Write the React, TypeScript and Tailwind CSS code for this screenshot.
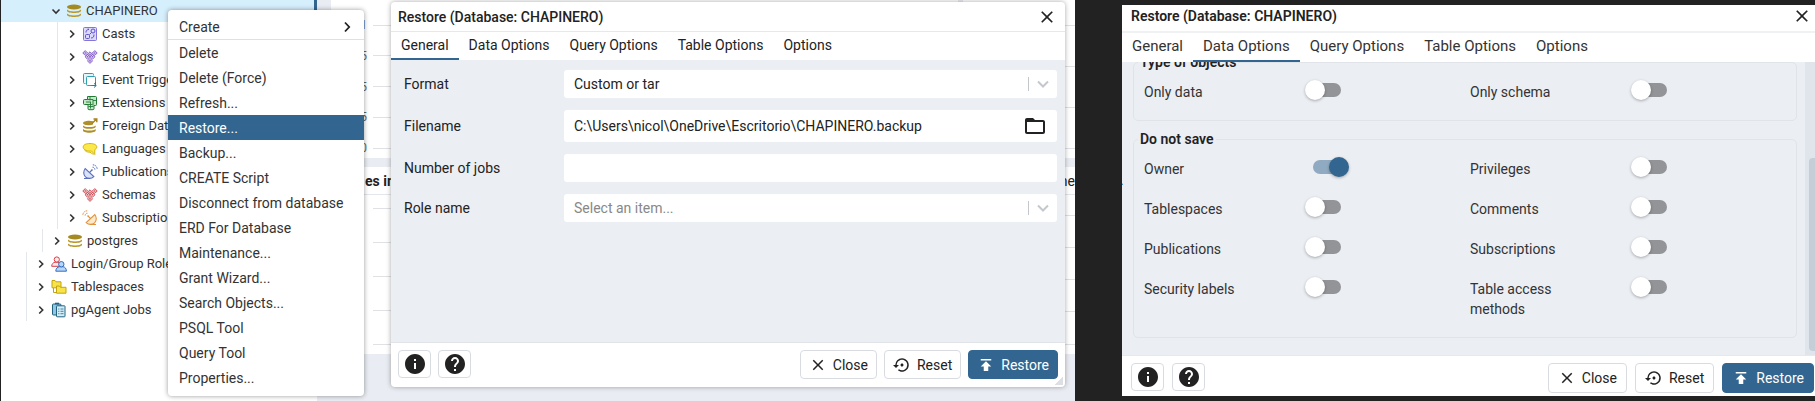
import { useState } from "react";
import type { ReactNode } from "react";
import {
  MdClose,
  MdFolderOpen,
  MdHelp,
  MdInfo,
  MdPublish,
  MdSettingsBackupRestore,
} from "react-icons/md";

/* ---------- Tree icons ---------- */

function Icon({ children }: { children: ReactNode }) {
  return (
    <svg viewBox="0 0 16 16" className="size-4 shrink-0" fill="none" aria-hidden="true">
      {children}
    </svg>
  );
}

function DatabaseIcon() {
  return (
    <Icon>
      <g fill="#b89a2c">
        <ellipse cx="8" cy="4" rx="7" ry="2.600" fill="#a58a1f" />
        <path d="M1 6.600c1 1.200 3.600 1.900 7 1.900s6-.7 7-1.900v1.200c0 1.300-3.100 2.300-7 2.300S1 9.100 1 7.800z" />
        <path d="M1 10.600c1 1.200 3.600 1.900 7 1.900s6-.7 7-1.900v1.200c0 1.300-3.100 2.300-7 2.300s-7-1-7-2.300z" />
      </g>
    </Icon>
  );
}

function CastsIcon() {
  return (
    <Icon>
      <rect x="1.500" y="1.500" width="13" height="13" rx="1" fill="#dcd9fa" stroke="#8277d8" />
      <rect x="3.500" y="8.500" width="4" height="4" rx="1" stroke="#5f51c9" />
      <circle cx="11" cy="5" r="2" stroke="#5f51c9" />
      <path d="M4 6.500C4 4.500 5 3.500 7 3.500M7 3.500 5.800 2.600M12 8.500c0 2.500-1 3.500-3 3.500M7.500 8.500l2-2" stroke="#5f51c9" />
    </Icon>
  );
}

function ClusterIcon({ stroke, fill }: { stroke: string; fill: string }) {
  return (
    <Icon>
      <g stroke={stroke} fill={fill} strokeWidth=".9">
        <path d="M3.200 1.600 5.600 4 3.200 6.400.8 4z" />
        <path d="M8 2.800 10.400 5.200 8 7.600 5.600 5.200z" />
        <path d="M12.800 1.600 15.200 4l-2.400 2.400L10.400 4z" />
        <path d="M5.500 5.400l2.400 2.400-2.400 2.400-2.400-2.400z" />
        <path d="M10.500 5.400l2.400 2.400-2.400 2.400-2.400-2.400z" />
        <path d="M8 9.400l2.500 2.500L8 14.400l-2.500-2.500z" />
      </g>
      <g fill={stroke}>
        <circle cx="3.200" cy="4" r=".8" />
        <circle cx="8" cy="5.200" r=".8" />
        <circle cx="12.800" cy="4" r=".8" />
        <circle cx="5.500" cy="7.800" r=".8" />
        <circle cx="10.500" cy="7.800" r=".8" />
        <circle cx="8" cy="11.900" r=".8" />
      </g>
    </Icon>
  );
}

function EventTriggerIcon() {
  return (
    <Icon>
      <path d="M3.500 11.500h-1a1 1 0 0 1-1-1v-8a1 1 0 0 1 1-1h8a1 1 0 0 1 1 1v1" fill="#e3f5f8" stroke="#2f9fae" />
      <path d="M10 13.500H5.500a1 1 0 0 1-1-1v-7a1 1 0 0 1 1-1h7a1 1 0 0 1 1 1V10" fill="#ffffff" stroke="#2f9fae" />
      <path d="M9.500 13.500H14m-2-2.200 2.300 2.200-2.300 2M13.500 10v3" stroke="#1d7f9c" />
    </Icon>
  );
}

function ExtensionsIcon() {
  return (
    <Icon>
      <path d="M5.500 1.500h8a1 1 0 0 1 1 1v7a1 1 0 0 1-1 1H12v3.200a1 1 0 0 1-1 1H7a1 1 0 0 1-1-1V9.500H2.500a1 1 0 0 1-1-1V5.500a1 1 0 0 1 1-1h3z" fill="#c2e8c5" stroke="#237a35" />
      <path d="M5.500 4.500H11v6M6 9.500h4.500M8 2v3.500M14 5.500h-3M4 7h5M8.500 7v6.500M6.500 11.500h5" stroke="#237a35" strokeWidth=".9" />
    </Icon>
  );
}

function ForeignDataIcon() {
  return (
    <Icon>
      <g fill="#b08f2a">
        <path d="M1 5c0-1.300 2.700-2.300 6-2.300 1.500 0 2.900.2 4 .6v3.200C10 7 8.600 7.300 7 7.300 3.700 7.300 1 6.300 1 5z" />
        <path d="M1 7.400c1.200 1.100 3.400 1.600 6.300 1.600s5.200-.5 6.400-1.600v1.300c0 1.200-2.900 2.100-6.400 2.100S1 9.900 1 8.700z" />
        <path d="M1 11c1.200 1.100 3.400 1.600 6.300 1.600s5.200-.5 6.400-1.600v1.600c0 1.300-2.900 2.200-6.400 2.200S1 13.900 1 12.600z" />
      </g>
      <path d="M10 5.500 14.500 1M11.500 1h3.300v3.300" stroke="#a8801c" strokeWidth="1.400" />
    </Icon>
  );
}

function LanguagesIcon() {
  return (
    <Icon>
      <path d="M8 2.500c3.800 0 6.800 1.300 6.800 3.500 0 1.100-.8 2-2 2.600v4.900L9.500 10c-.5 0-1 .1-1.500.1-3.800 0-6.800-1.700-6.800-4.100S4.200 2.500 8 2.500z" fill="#fbe94b" stroke="#d4b50c" />
      <path d="M2.500 8.500c.5 1.800 2.500 2.700 5.500 2.700l3.500 2.300" stroke="#d4b50c" />
    </Icon>
  );
}

function DishIcon({ stroke, fill, flip }: { stroke: string; fill: string; flip?: boolean }) {
  return (
    <Icon>
      <g transform={flip ? "translate(16 0) scale(-1 1)" : undefined}>
        <path d="M3.200 4.500c-2 2.600-2 6.200.2 8.300s6 2.200 8.400-.2z" fill={fill} stroke={stroke} strokeWidth="1.100" />
        <path d="M7.500 8.500 10 6M2 14.500h6" stroke={stroke} strokeWidth="1.100" />
        <circle cx="10" cy="6" r=".8" fill={stroke} />
        <path d="M10.500 3.200c1.500 0 2.400 1 2.400 2.400M10.800.8c2.600 0 4.400 1.900 4.400 4.400" stroke={stroke} strokeDasharray="1.600 .8" />
      </g>
    </Icon>
  );
}

function RolesIcon() {
  return (
    <Icon>
      <g stroke="#d2424a" fill="#fdeaea">
        <path d="M.7 10.300c0-2.300 1.500-3.800 3.300-4.100h3c1.500.3 2.500 1.500 2.800 4.100z" />
        <circle cx="5.800" cy="3.500" r="2.600" />
      </g>
      <g stroke="#2f6fbf" fill="#b8d6f6">
        <path d="M4.800 15.200c0-2.600 1.600-4.200 3.600-4.500h3.700c2 .3 3.300 1.900 3.300 4.500z" />
        <circle cx="10.300" cy="8.200" r="2.700" />
      </g>
    </Icon>
  );
}

function TablespacesIcon() {
  return (
    <Icon>
      <g fill="#f8e34a" stroke="#c2a50e">
        <path d="M1 1.500h3l1 1.300h5v6H1z" />
        <path d="M2.500 9v4.500H5" fill="none" />
        <path d="M5.500 7h3l1 1.300h5.500v5.900H5.500z" />
      </g>
    </Icon>
  );
}

function AgentIcon() {
  return (
    <Icon>
      <path d="M5 13H2.500a1 1 0 0 1-1-1V3a1 1 0 0 1 1-1h6.500a1 1 0 0 1 1 1v1" fill="#8fc6e4" stroke="#22627f" />
      <path d="M4 1.500h4" stroke="#22627f" strokeWidth="1.600" />
      <rect x="5.500" y="3.800" width="8.500" height="11" rx=".6" fill="#d5edf8" stroke="#22627f" />
      <path d="M7.200 7h1.200M9.500 7h3M7.200 9.300h1.200M9.500 9.300h3M7.200 11.700h1.200M9.500 11.700h3" stroke="#3d85a8" />
    </Icon>
  );
}

/* ---------- Object tree ---------- */

function Chevron({ open = false }: { open?: boolean }) {
  return (
    <svg viewBox="0 0 12 12" className="size-3 shrink-0" fill="none" stroke="#333" strokeWidth="1.600" aria-hidden="true">
      {open ? <path d="M2.500 4.500 6 8l3.500-3.500" /> : <path d="M4.200 2.500 7.700 6l-3.500 3.500" />}
    </svg>
  );
}

function TreeRow({ icon, label, open }: { icon: ReactNode; label: string; open?: boolean }) {
  return (
    <div role="treeitem" aria-expanded={!!open} className="flex h-[23px] items-center gap-1 pl-2 whitespace-nowrap">
      <Chevron open={open} />
      {icon}
      <span>{label}</span>
    </div>
  );
}

const databaseChildren: [string, ReactNode][] = [
  ["Casts", <CastsIcon />],
  ["Catalogs", <ClusterIcon stroke="#7a4fc4" fill="#e4d8f8" />],
  ["Event Triggers", <EventTriggerIcon />],
  ["Extensions", <ExtensionsIcon />],
  ["Foreign Data", <ForeignDataIcon />],
  ["Languages", <LanguagesIcon />],
  ["Publications", <DishIcon stroke="#5a6fc0" fill="#dbe3f8" />],
  ["Schemas", <ClusterIcon stroke="#c8404a" fill="#f8dcdc" />],
  ["Subscriptions", <DishIcon stroke="#e2913c" fill="#fdeacb" flip />],
];

function ObjectTree() {
  return (
    <nav role="tree" aria-label="Object explorer" className="w-[317px] shrink-0 overflow-hidden border-l border-[#222] bg-white text-[13px] text-[#333]">
      <div className="flex h-[22px] items-center border-r-3 border-[#326690] bg-[#d6effc] pl-[41px]">
        <TreeRow icon={<DatabaseIcon />} label="CHAPINERO" open />
      </div>
      <div className="ml-14 border-l border-[#e3e6ea]">
        {databaseChildren.map(([label, icon]) => (
          <TreeRow key={label} icon={icon} label={label} />
        ))}
      </div>
      <div className="ml-[41px] border-l border-[#e3e6ea]">
        <TreeRow icon={<DatabaseIcon />} label="postgres" />
      </div>
      <div className="ml-[25px] border-l border-[#e3e6ea]">
        <TreeRow icon={<RolesIcon />} label="Login/Group Roles" />
        <TreeRow icon={<TablespacesIcon />} label="Tablespaces" />
        <TreeRow icon={<AgentIcon />} label="pgAgent Jobs" />
      </div>
    </nav>
  );
}

/* ---------- Dashboard behind the dialog ---------- */

function GridLines({ labels }: { labels: string[] }) {
  return (
    <div className="flex flex-1 flex-col justify-between">
      {labels.map((label, i) => (
        <div key={i} className="flex h-3 items-center gap-1.5">
          <span className="w-9 text-right text-xs leading-3 text-[#666]">{label}</span>
          <span className="h-px flex-1 bg-[#dfe1e4]" />
        </div>
      ))}
    </div>
  );
}

function Dashboard() {
  return (
    <div className="flex min-w-0 flex-1 flex-col gap-[9px] bg-[#e9ecf2] pl-3.5">
      <div className="flex h-[158px] gap-[5px]">
        <div className="flex flex-1 bg-white pt-[19px] pb-1">
          <GridLines labels={["1", "5", "5", "5", "0"]} />
        </div>
        <div className="flex w-28 bg-white pt-[19px] pb-1">
          <GridLines labels={["", "", "", ""]} />
        </div>
      </div>
      <div className="flex gap-[5px] text-sm text-[#222]">
        <div className="flex h-[187px] flex-1 flex-col bg-white pb-1">
          <h3 className="h-7 border-b border-[#e3e6ea] pl-[34px] leading-7 font-bold">es in</h3>
          <div className="flex flex-1 pt-[7px]">
            <GridLines labels={["", "", "", "", ""]} />
          </div>
        </div>
        <div className="flex h-[187px] w-28 flex-col overflow-hidden bg-white pb-1">
          <h3 className="h-7 border-b border-[#e3e6ea] text-right leading-7">ne</h3>
          <div className="flex flex-1 pt-3.5">
            <GridLines labels={["", "", "", "", ""]} />
          </div>
        </div>
      </div>
    </div>
  );
}

/* ---------- Context menu ---------- */

const menuItems = [
  "Delete",
  "Delete (Force)",
  "Refresh...",
  "Restore...",
  "Backup...",
  "CREATE Script",
  "Disconnect from database",
  "ERD For Database",
  "Maintenance...",
  "Grant Wizard...",
  "Search Objects...",
  "PSQL Tool",
  "Query Tool",
  "Properties...",
];

function ContextMenu() {
  return (
    <div role="menu" className="absolute top-2.5 left-[168px] w-[196px] rounded bg-white pb-1.5 text-sm text-[#333] shadow-[0_0_5px_rgba(0,0,0,0.4)]">
      <button role="menuitem" className="flex h-[30px] w-full items-center justify-between border-b border-[#dde0e4] px-[11px] pt-1">
        Create
        <svg viewBox="0 0 12 12" className="size-3" fill="none" stroke="#222" strokeWidth="1.800" aria-hidden="true">
          <path d="M4 1.500 8.200 6 4 10.500" />
        </svg>
      </button>
      {menuItems.map((item) => (
        <button
          key={item}
          role="menuitem"
          className={
            item === "Restore..."
              ? "block h-[25px] w-full bg-[#326690] px-[11px] text-left text-white"
              : "block h-[25px] w-full px-[11px] text-left"
          }
        >
          {item}
        </button>
      ))}
    </div>
  );
}

/* ---------- Restore dialog parts ---------- */

const tabs = ["General", "Data Options", "Query Options", "Table Options", "Options"];

function DialogHeader({ roomy }: { roomy?: boolean }) {
  return (
    <header
      className={
        roomy
          ? "flex h-7 items-center justify-between border-b-2 border-[#f0f1f3] pr-[3px] pb-1 pl-[9px]"
          : "flex h-[30px] items-center justify-between border-b border-[#e6e8eb] pr-2 pl-[7px]"
      }
    >
      <h2 className={roomy ? "text-sm font-semibold text-[#222]" : "text-sm font-medium text-[#222]"}>
        Restore (Database: CHAPINERO)
      </h2>
      <button aria-label="Close dialog" className="text-[#222]">
        <MdClose className="size-5" />
      </button>
    </header>
  );
}

function TabBar({ active, roomy }: { active: string; roomy?: boolean }) {
  return (
    <div role="tablist" className={roomy ? "flex h-[29px] text-[15px]" : "flex h-7 text-sm"}>
      {tabs.map((tab) => (
        <button
          key={tab}
          role="tab"
          aria-selected={tab === active}
          className={
            tab === active
              ? "border-b-2 border-[#326690] px-2.5 whitespace-nowrap"
              : "border-b-2 border-transparent px-2.5 whitespace-nowrap"
          }
        >
          {tab}
        </button>
      ))}
    </div>
  );
}

function DialogFooter({ roomy }: { roomy?: boolean }) {
  const action = roomy
    ? "flex h-[30px] items-center gap-1.5 rounded border px-[9px]"
    : "flex h-[29px] items-center gap-1.5 rounded border px-2";
  const square = "flex h-7 w-[33px] items-center justify-center rounded border border-[#d8dce1] text-[#222]";
  return (
    <footer
      className={
        roomy
          ? "flex items-start gap-2 border-t border-[#e6e8eb] pt-[7px] pr-px pb-[3px] pl-[9px] text-sm"
          : "flex items-start gap-[7px] border-t border-[#e0e3e8] pt-[7px] pr-[7px] pb-2 pl-[7px] text-sm"
      }
    >
      <button aria-label="Information" className={square}>
        <MdInfo className="size-6" />
      </button>
      <button aria-label="Help" className={square}>
        <MdHelp className="size-6" />
      </button>
      <div className="flex-1" />
      <button className={`${action} border-[#d8dce1] text-[#222]`}>
        <MdClose className="size-[18px]" />
        Close
      </button>
      <button className={`${action} border-[#d8dce1] text-[#222]`}>
        <MdSettingsBackupRestore className="size-[18px]" />
        Reset
      </button>
      <button className={`${action} border-[#326690] bg-[#326690] text-white`}>
        <MdPublish className="size-[18px]" />
        Restore
      </button>
    </footer>
  );
}

function SelectBox({ id, value, muted }: { id: string; value: string; muted?: boolean }) {
  return (
    <div className="relative">
      <select
        id={id}
        defaultValue={value}
        className={
          muted
            ? "block h-7 w-full appearance-none rounded-[3px] bg-white px-2.5 text-[#888]"
            : "block h-7 w-full appearance-none rounded-[3px] bg-white px-2.5 text-[#222]"
        }
      >
        <option>{value}</option>
      </select>
      <span className="pointer-events-none absolute inset-y-0 right-2 flex items-center gap-2">
        <span className="h-3.5 w-px bg-[#c4c7cb]" />
        <svg viewBox="0 0 12 12" className="size-3" fill="none" stroke="#c4c7cb" strokeWidth="2" aria-hidden="true">
          <path d="M1 3.500 6 8.500l5-5" />
        </svg>
      </span>
    </div>
  );
}

function GeneralDialog() {
  return (
    <section
      role="dialog"
      aria-label="Restore, General"
      className="absolute top-0.5 right-2.5 bottom-3.5 left-[391px] flex flex-col rounded bg-white text-sm text-[#222] shadow-[0_0_5px_rgba(0,0,0,0.35)]"
    >
      <DialogHeader />
      <TabBar active="General" />
      <div className="grid flex-1 auto-rows-min grid-cols-[160px_1fr] items-center gap-y-3 bg-[#ebeef3] pt-2.5 pr-2 pl-[13px]">
        <label htmlFor="format">Format</label>
        <SelectBox id="format" value="Custom or tar" />
        <label htmlFor="filename">Filename</label>
        <div className="flex h-8 items-center rounded-[3px] bg-white px-2.5">
          <input id="filename" defaultValue="C:\Users\nicol\OneDrive\Escritorio\CHAPINERO.backup" className="min-w-0 flex-1 outline-none" />
          <button aria-label="Select file">
            <MdFolderOpen className="size-6" />
          </button>
        </div>
        <label htmlFor="jobs">Number of jobs</label>
        <input id="jobs" className="h-7 rounded-[3px] bg-white px-2.5 outline-none" />
        <label htmlFor="role">Role name</label>
        <SelectBox id="role" value="Select an item..." muted />
      </div>
      <DialogFooter />
      <span className="absolute right-0.5 bottom-0.5 size-2 bg-[linear-gradient(135deg,transparent_50%,#dcdfe3_50%)]" />
    </section>
  );
}

function Toggle({ label, initial = false }: { label: string; initial?: boolean }) {
  const [on, setOn] = useState(initial);
  return (
    <label className="grid grid-cols-[161px_1fr] items-start">
      <span className="max-w-24 py-2.5">{label}</span>
      <span className="relative mt-2 flex h-5 w-11 items-center px-2">
        <input type="checkbox" role="switch" checked={on} onChange={() => setOn(!on)} className="absolute inset-0 opacity-0" />
        <span className={on ? "h-3.5 w-full rounded-full bg-[#8faac1]" : "h-3.5 w-full rounded-full bg-[#929498]"} />
        <span
          className={
            on
              ? "absolute right-0 size-5 rounded-full bg-[#326690] shadow-[0_1px_3px_rgba(0,0,0,0.3)]"
              : "absolute left-0 size-5 rounded-full bg-white shadow-[0_1px_3px_rgba(0,0,0,0.3)]"
          }
        />
      </span>
    </label>
  );
}

function OptionGroup({ title, children }: { title: string; children: ReactNode }) {
  return (
    <fieldset className="rounded-[5px] border border-[#e0e4e9] pb-2 pl-2.5">
      <legend className="-ml-1.5 px-0.5 font-semibold text-[#222]">{title}</legend>
      <div className="grid grid-cols-2">{children}</div>
    </fieldset>
  );
}

function DataOptionsDialog() {
  return (
    <section role="dialog" aria-label="Restore, Data Options" className="flex min-w-0 flex-1 flex-col bg-white text-[#333]">
      <DialogHeader roomy />
      <TabBar active="Data Options" roomy />
      <div className="flex flex-1 overflow-hidden bg-[#ebeef3] text-sm">
        <div className="-mt-2.5 flex flex-1 flex-col gap-2 pr-2 pl-[11px]">
          <OptionGroup title="Type of objects">
            <Toggle label="Only data" />
            <Toggle label="Only schema" />
          </OptionGroup>
          <OptionGroup title="Do not save">
            <Toggle label="Owner" initial />
            <Toggle label="Privileges" />
            <Toggle label="Tablespaces" />
            <Toggle label="Comments" />
            <Toggle label="Publications" />
            <Toggle label="Subscriptions" />
            <Toggle label="Security labels" />
            <Toggle label="Table access methods" />
          </OptionGroup>
        </div>
        <div className="flex w-2.5 flex-col justify-end bg-[#e0e4eb] pb-1 pl-1">
          <div className="h-2/3 rounded-l bg-[#c5cdd6]" />
        </div>
      </div>
      <DialogFooter roomy />
    </section>
  );
}

export default function App() {
  return (
    <main className="grid min-h-screen grid-cols-[1075fr_740fr] bg-[#222] font-[Roboto,sans-serif]">
      <div className="relative flex overflow-hidden">
        <ObjectTree />
        <Dashboard />
        <GeneralDialog />
        <ContextMenu />
      </div>
      <div className="relative flex py-[5px] pl-[47px]">
        <DataOptionsDialog />
        <span className="absolute top-[170px] left-[45px] text-sm text-[#222]">.</span>
      </div>
    </main>
  );
}
